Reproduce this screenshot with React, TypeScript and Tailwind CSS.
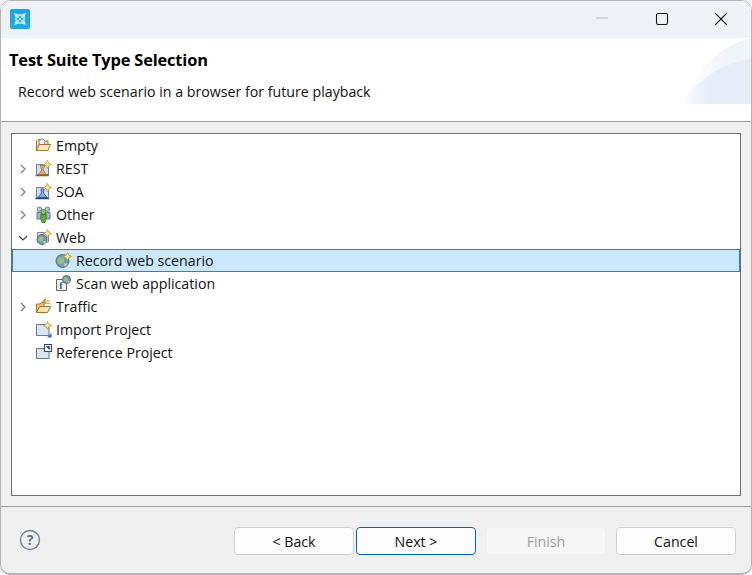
import React from "react";

function Chevron({ open }: { open?: boolean }) {
  return (
    <svg width="10" height="10" viewBox="0 0 10 10" fill="none" stroke="#7a7a7a" strokeWidth="1.2">
      {open ? <path d="M1 3.2 L5 7 L9 3.2" stroke="#404040" /> : <path d="M3 1 L7 5 L3 9" />}
    </svg>
  );
}

function Frame() {
  return <path d="M1.5 4.5 H10 L13.5 7 V14.5 H1.5 Z" fill="#cfe0f2" stroke="#6a7ea6" />;
}

function Spark() {
  return (
    <path d="M12.5 0.5 L13.7 3.3 L16.5 4.5 L13.7 5.7 L12.5 8.5 L11.3 5.7 L8.5 4.5 L11.3 3.3 Z" fill="#fff3b0" stroke="#c9982c" strokeWidth="0.9" />
  );
}

function Globe({ x = 8, y = 9, r = 5 }: { x?: number; y?: number; r?: number }) {
  return (
    <g>
      <circle cx={x} cy={y} r={r} fill="#5f9fd0" stroke="#4e5f78" strokeWidth="0.9" />
      <path d={`M${x - r * 0.8} ${y - r * 0.2} q${r * 0.6} ${-r * 0.7} ${r} ${-r * 0.2} q${r * 0.2} ${r * 0.7} ${-r * 0.4} ${r * 0.8} q${-r * 0.4} ${r * 0.3} ${-r * 0.6} ${-r * 0.6}`} fill="#a9bd62" />
      <path d={`M${x + r * 0.1} ${y + r * 0.4} q${r * 0.6} ${-r * 0.2} ${r * 0.7} ${r * 0.1} l${-r * 0.4} ${r * 0.4} z`} fill="#e2c56c" />
    </g>
  );
}

type IconKind = "empty" | "rest" | "soa" | "other" | "web" | "record" | "scan" | "traffic" | "import" | "reference";

function TreeIcon({ kind }: { kind: IconKind }) {
  return (
    <svg width="17" height="17" viewBox="0 0 17 17" className="shrink-0">
      {kind === "empty" && (
        <>
          <path d="M1.5 13.5 V4 L3 2.5 H7 L8.5 4 H13 V13.5 Z" fill="#f2d8a8" stroke="#a07530" />
          <circle cx="7" cy="5" r="3" fill="#f0f0f0" stroke="#8f8f8f" strokeWidth="0.9" />
          <path d="M1.5 13.5 L4 7.5 H15.5 L13 13.5 Z" fill="#fbe6bd" stroke="#a07530" />
        </>
      )}
      {kind === "rest" && (
        <>
          <Frame />
          <Spark />
          <path d="M5 5.5 H10 L8 10 L11.5 14.5 H3.5 L7 10 Z" fill="#dba67c" stroke="#a8703e" strokeWidth="0.8" />
          <path d="M0.5 15.5 H14" stroke="#8f5a26" strokeWidth="1.5" />
        </>
      )}
      {kind === "soa" && (
        <>
          <Frame />
          <Spark />
          <path d="M6 6 H9 L8.5 10 L12 14.5 H3 L6.5 10 Z" fill="#8aacdc" stroke="#2f58a0" strokeWidth="0.9" />
          <path d="M0.5 15.5 H14" stroke="#24478e" strokeWidth="1.5" />
        </>
      )}
      {kind === "other" && (
        <>
          <circle cx="4.5" cy="3.2" r="2.2" fill="#b8cbe0" stroke="#4f6682" strokeWidth="0.8" />
          <circle cx="12.5" cy="3.2" r="2.2" fill="#b8cbe0" stroke="#4f6682" strokeWidth="0.8" />
          <path d="M2 6.5 H7 V13 H2 Z M10 6.5 H15 V13 H10 Z" fill="#9fb6d0" stroke="#4a6180" strokeWidth="0.8" />
          <circle cx="8.5" cy="6" r="2.4" fill="#8ecb4e" stroke="#437c22" strokeWidth="0.8" />
          <path d="M5.8 8.5 H11.2 V13 L10 16.5 H7 L5.8 13 Z" fill="#66ad32" stroke="#37721c" strokeWidth="0.8" />
        </>
      )}
      {kind === "web" && (
        <>
          <path d="M2.5 3.5 H9 L13.5 6 V13 H2.5 Z" fill="#dfe7f0" stroke="#75859f" />
          <Globe x={7} y={10.5} r={5} />
          <Spark />
        </>
      )}
      {kind === "record" && (
        <>
          <Globe x={7.5} y={9} r={6.5} />
          <Spark />
        </>
      )}
      {kind === "scan" && (
        <>
          <path d="M1.5 4.5 H11.5 V15.5 H1.5 Z" fill="#eef2f6" stroke="#7f6236" />
          <text x="4.2" y="14" fontSize="10" fontWeight="700" fill="#2f5f96" fontFamily="'Liberation Serif', serif">f</text>
          <Globe x={11.5} y={4.5} r={4} />
        </>
      )}
      {kind === "traffic" && (
        <>
          <path d="M1.5 14.5 V6 H5 L6.5 4.5 H9 V14.5 Z" fill="#f0c67e" stroke="#a87528" />
          <path d="M1.5 14.5 L4.5 8.5 H15.5 L12.5 14.5 Z" fill="#fbe2ae" stroke="#a87528" />
          <path d="M8 3 H15 M11 0.8 L8 3 L11 5.2" fill="none" stroke="#c98a2c" strokeWidth="1.1" />
          <path d="M8.5 5.5 H15" stroke="#d9a64e" strokeWidth="1.1" />
        </>
      )}
      {kind === "import" && (
        <>
          <path d="M1.5 3.5 H10 L14 6 V14.5 H1.5 Z" fill="#dbe6f3" stroke="#65759a" />
          <Spark />
          <path d="M16.5 16.5 H12 L16.5 12 Z" fill="#2f6fb5" />
        </>
      )}
      {kind === "reference" && (
        <>
          <path d="M1.5 4.5 H9 V6.5 H14 V14.5 H1.5 Z" fill="#dbe6f3" stroke="#65759a" />
          <rect x="9.5" y="0.5" width="7" height="7" fill="#fff" stroke="#33476e" />
          <path d="M11.5 2.5 H14.5 V5.5 Z M11.5 2.5 L14.5 5.5" fill="#2f4f86" stroke="#2f4f86" strokeWidth="0.8" />
        </>
      )}
    </svg>
  );
}

const rows: { label: string; icon: IconKind; level: number; arrow?: "open" | "closed"; selected?: boolean }[] = [
  { label: "Empty", icon: "empty", level: 0 },
  { label: "REST", icon: "rest", level: 0, arrow: "closed" },
  { label: "SOA", icon: "soa", level: 0, arrow: "closed" },
  { label: "Other", icon: "other", level: 0, arrow: "closed" },
  { label: "Web", icon: "web", level: 0, arrow: "open" },
  { label: "Record web scenario", icon: "record", level: 1, selected: true },
  { label: "Scan web application", icon: "scan", level: 1 },
  { label: "Traffic", icon: "traffic", level: 0, arrow: "closed" },
  { label: "Import Project", icon: "import", level: 0 },
  { label: "Reference Project", icon: "reference", level: 0 },
];

function Btn({ children, variant }: { children: React.ReactNode; variant?: "primary" | "disabled" }) {
  const cls =
    variant === "primary"
      ? "border-[#0067c0] bg-[#fdfdfd] text-[#111111]"
      : variant === "disabled"
      ? "border-[#f0f0f0] bg-[#f7f7f7] text-[#a0a0a0]"
      : "border-[#d0d0d0] bg-[#fdfdfd] text-[#111111]";
  return (
    <div className={`flex h-[28px] w-[120px] items-center justify-center rounded-[4px] border pt-[3px] text-[14.2px] ${cls}`}>
      {children}
    </div>
  );
}

export default function App() {
  return (
    <div className="h-[575px] w-[752px] overflow-hidden bg-white font-['Open_Sans','Noto_Sans',sans-serif] text-[#111111]">
      <div className="flex h-full w-full flex-col overflow-hidden rounded-[10px] border border-b-2 border-[#b4b4b4] bg-[#f0f0f0]">
        <div className="flex h-[37px] shrink-0 items-center bg-[#eff3f9] pb-[2px] pl-[9px]">
          <svg width="20" height="20" viewBox="0 0 20 20">
            <rect width="20" height="20" rx="2" fill="#1ba9e6" />
            <path d="M4 4 L9 5.5 L5.5 9 Z M16 4 L14.5 9 L11 5.5 Z M16 16 L11 14.5 L14.5 11 Z M4 16 L5.5 11 L9 14.5 Z" fill="#c8ecfb" />
            <path d="M10 5.5 L14.5 10 L10 14.5 L5.5 10 Z" fill="none" stroke="#c8ecfb" strokeWidth="1.1" />
            <path d="M7 7 L13 13 M13 7 L7 13" stroke="#e4f6fd" strokeWidth="0.9" />
          </svg>
          <div className="ml-auto flex items-center">
            <svg width="14" height="14" viewBox="0 0 14 14" className="mr-[46px]">
              <path d="M1 6 H13" stroke="#b8b8b8" />
            </svg>
            <svg width="14" height="14" viewBox="0 0 14 14" className="mr-[45px]">
              <rect x="1.5" y="1.5" width="11" height="11" rx="1.5" fill="none" stroke="#1a1a1a" strokeWidth="1.1" />
            </svg>
            <svg width="14" height="14" viewBox="0 0 14 14" className="mr-[23px]">
              <path d="M1 1 L13 13 M13 1 L1 13" stroke="#1a1a1a" strokeWidth="1.1" />
            </svg>
          </div>
        </div>
        <div className="relative h-[84px] shrink-0 border-b border-[#a0a0a0] bg-white pl-[8px]">
          <svg width="70" height="66" viewBox="0 0 70 66" className="absolute right-0 top-0">
            <defs>
              <linearGradient id="fade" x1="0" x2="1" y1="0" y2="0">
                <stop offset="0" stopColor="#e6edf9" stopOpacity="0" />
                <stop offset="0.45" stopColor="#e6edf9" />
              </linearGradient>
              <linearGradient id="fade2" x1="0" x2="1" y1="0" y2="0">
                <stop offset="0" stopColor="#eef2fb" stopOpacity="0" />
                <stop offset="0.7" stopColor="#f0f4fb" />
              </linearGradient>
            </defs>
            <path d="M2 66 Q25 10 70 0 V66 Z" fill="url(#fade2)" />
            <path d="M0 66 Q25 28 70 21 V66 Z" fill="url(#fade)" />
          </svg>
          <div className="relative pt-[10px] text-[16.4px] font-bold leading-[24px] tracking-[-0.15px] text-black">
            Test Suite Type Selection
          </div>
          <div className="relative ml-[9px] mt-[8px] text-[14.2px] leading-[24px]">
            Record web scenario in a browser for future playback
          </div>
        </div>
        <div className="flex min-h-0 flex-1 flex-col">
          <div className="mx-[10px] mb-[10px] mt-[11px] h-[363px] shrink-0 border border-[#6e6e6e] bg-white">
            {rows.map((r) => (
              <div
                key={r.label}
                className={`flex h-[23px] items-center text-[14.2px] ${
                  r.selected ? "border border-[#2f80c2] bg-[#cce8ff]" : ""
                }`}
              >
                <div className={`flex shrink-0 items-center ${r.level === 1 ? "w-[43px]" : "w-[23px]"} ${r.selected ? "-ml-px" : ""}`}>
                  {r.arrow && (
                    <span className="ml-[6px] flex">
                      <Chevron open={r.arrow === "open"} />
                    </span>
                  )}
                </div>
                <TreeIcon kind={r.icon} />
                <span className="ml-[4px] whitespace-nowrap">{r.label}</span>
              </div>
            ))}
          </div>
          <div className="flex flex-1 items-center border-t border-[#a0a0a0] pl-[18px] pr-[15px] pt-[1px]">
            <svg width="22" height="22" viewBox="0 0 22 22" className="-mt-[2px]">
              <circle cx="11" cy="11" r="9.5" fill="none" stroke="#6f7f9c" strokeWidth="1.4" />
              <text x="11" y="16" textAnchor="middle" fontSize="14" fontWeight="700" fill="#5f7090" fontFamily="'Open Sans', sans-serif">?</text>
            </svg>
            <div className="ml-auto flex">
              <Btn>&lt; Back</Btn>
              <div className="ml-[2px]">
                <Btn variant="primary">Next &gt;</Btn>
              </div>
              <div className="ml-[10px]">
                <Btn variant="disabled">Finish</Btn>
              </div>
              <div className="ml-[10px]">
                <Btn>Cancel</Btn>
              </div>
            </div>
          </div>
        </div>
      </div>
    </div>
  );
}
